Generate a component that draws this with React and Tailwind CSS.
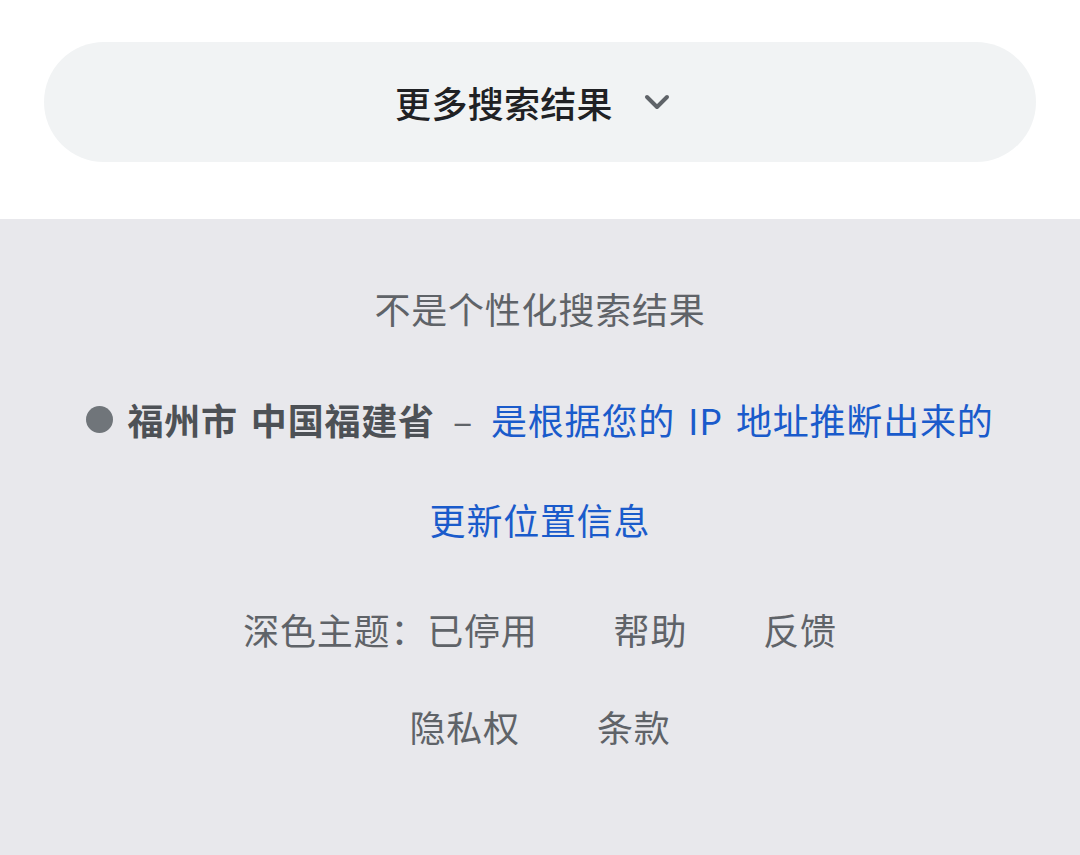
import React from "react";

const font = { fontFamily: '"Noto Sans CJK SC", "Noto Sans", sans-serif' };

const ChevronDown = () => (
  <svg width="36" height="36" viewBox="0 0 36 36" fill="none">
    <path d="M8 13 L18 23 L28 13" stroke="#5f6368" strokeWidth="4" strokeLinecap="round" strokeLinejoin="round" />
  </svg>
);

const App = () => {
  return (
    <div className="w-[1080px] min-h-[855px] bg-[#e8e8ec]" style={font}>
      {/* More results */}
      <div className="bg-white pt-[42px] pb-[57px] px-[44px]">
        <button className="w-full h-[120px] rounded-full bg-[#f1f3f4] flex items-center justify-center pr-[10px]">
          <span className="text-[36px] leading-none font-medium tracking-[0.3px] text-[#202124]">更多搜索结果</span>
          <span className="ml-[26px]">
            <ChevronDown />
          </span>
        </button>
      </div>

      {/* Footer */}
      <div className="flex flex-col items-center text-[36px] leading-[48px] tracking-[0.8px] text-[#5f6368] pb-[80px]">
        <div className="mt-[65px]">不是个性化搜索结果</div>

        <div className="mt-[63px] flex items-center">
          <span className="w-[27px] h-[27px] rounded-full bg-[#70757a] mr-[14px]" />
          <span className="font-bold text-[#4d5156]">福州市</span>
          <span className="font-bold text-[#4d5156] ml-[13px]">中国福建省</span>
          <span className="mx-[18px]">–</span>
          <a className="text-[#1a5bcb]">是根据您的</a>
          <a className="text-[#1a5bcb] mx-[13px]">IP</a>
          <a className="text-[#1a5bcb]">地址推断出来的</a>
        </div>

        <a className="mt-[52px] text-[#1a5bcb]">更新位置信息</a>

        <div className="mt-[62px] flex items-center gap-[76px]">
          <span>深色主题：已停用</span>
          <span>帮助</span>
          <span>反馈</span>
        </div>

        <div className="mt-[49px] flex items-center gap-[77px]">
          <span>隐私权</span>
          <span>条款</span>
        </div>
      </div>
    </div>
  );
};

export default App;
